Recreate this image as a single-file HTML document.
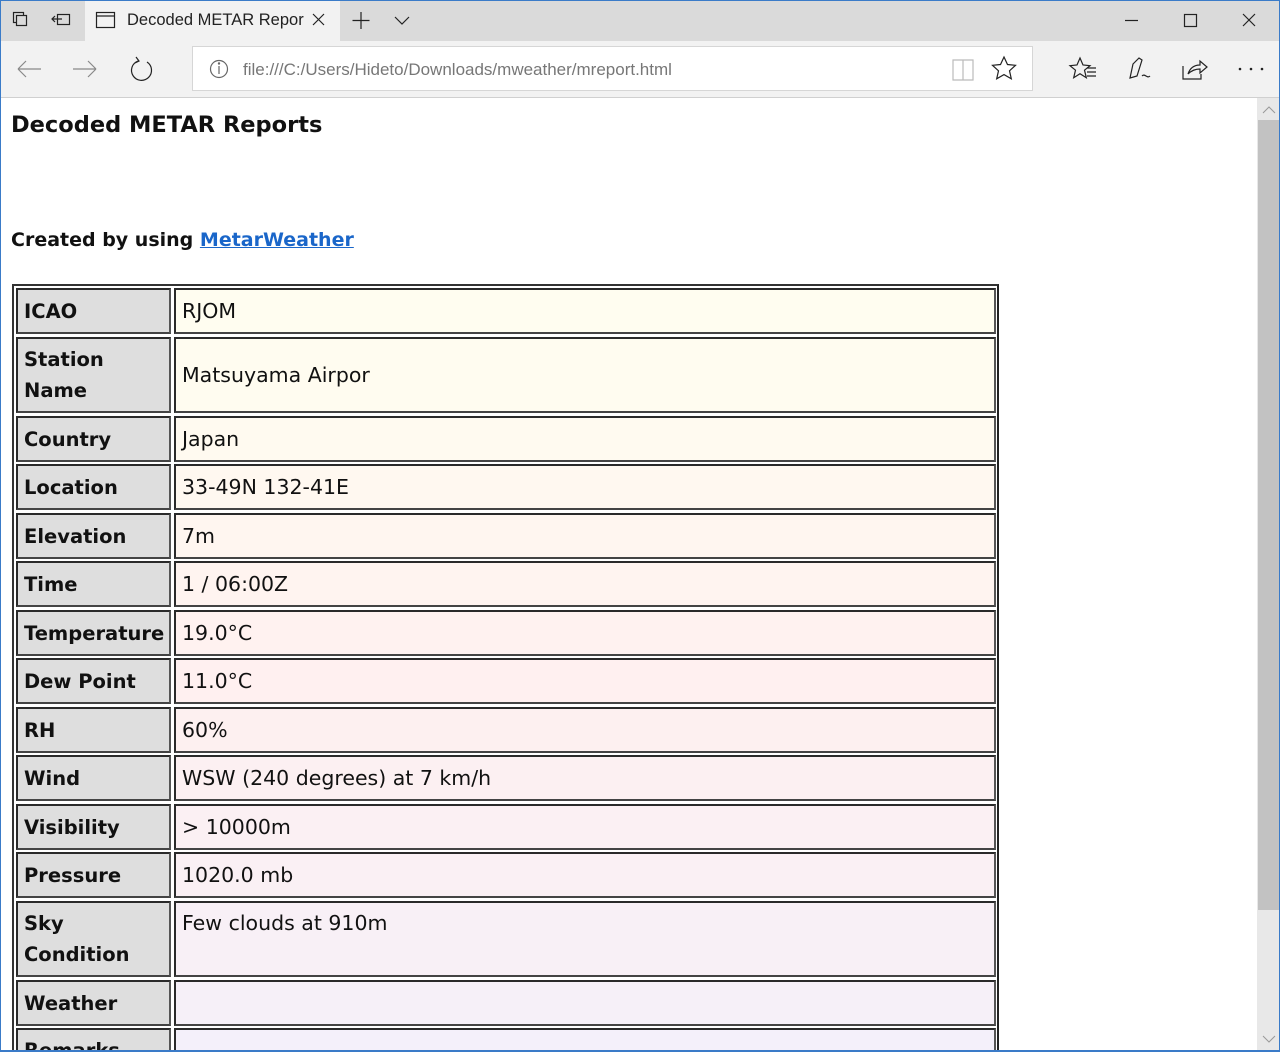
<!DOCTYPE html>
<html style="overflow:hidden;height:1052px"><head><meta charset="utf-8"><style>
*{margin:0;padding:0;box-sizing:border-box}
body{width:1280px;height:1052px;overflow:hidden;background:#fff;font-family:"DejaVu Sans","Liberation Sans",sans-serif;position:relative}
.abs{position:absolute}
#tabbar{left:0;top:0;width:1280px;height:41px;background:#dadada;border-top:1px solid #3a7bc8}
#tab{left:85px;top:1px;width:255px;height:40px;background:#f2f2f2}
#addr{left:0;top:41px;width:1280px;height:57px;background:#f2f2f2;border-bottom:1px solid #d0d0d0}
#url{left:192px;top:46px;width:841px;height:45px;background:#fff;border:1px solid #d6d6d6}
.ui{font-family:"Liberation Sans",sans-serif;color:#222}
#sb{left:1257px;top:98px;width:23px;height:954px;background:#e8e8e8}
#thumb{left:1258px;top:120px;width:21px;height:790px;background:#c2c2c2}
.c{position:absolute;border:2px solid #2a2a2a;border-right-color:#555;border-bottom-color:#444;padding-left:6px;display:flex;align-items:center;line-height:31px;color:#111}
.l{left:16px;width:155px;background:#dedede;font-weight:bold;font-size:19.5px}
.v{left:174px;width:822px;font-size:20.5px}
#wrap{position:absolute;left:0;top:0;width:1280px;height:1052px;overflow:hidden}
</style></head><body><div id="wrap">
<div id="tabbar" class="abs"></div>
<div id="tab" class="abs"></div>
<svg class="abs" style="left:0;top:0" width="1280" height="41" fill="none" stroke="#222" stroke-width="1.2">
<rect x="13.5" y="12.5" width="10" height="10"/><rect x="16.5" y="15.5" width="10" height="10" fill="#dadada"/>
<rect x="57.5" y="14.5" width="12" height="10"/><path d="M52 19h10M55 16l-3 3 3 3"/>
<rect x="96.5" y="12.5" width="18" height="15"/><path d="M97 16h17"/>
<path d="M313 14l11 11M324 14l-11 11"/>
<path d="M361 12v17M352.5 20.5h17"/><path d="M395 17l7 7 7-7"/>
<path d="M1125 20.5h13"/><rect x="1184.5" y="14.5" width="12" height="12"/><path d="M1243 14l12 12M1255 14l-12 12"/>
</svg>
<div class="abs ui" style="left:127px;top:11px;font-size:16.5px">Decoded METAR Repor</div>
<div id="addr" class="abs"></div>
<div id="url" class="abs"></div>
<svg class="abs" style="left:0;top:41px;z-index:2" width="1280" height="57" fill="none" stroke="#666" stroke-width="1.2">
<circle cx="219" cy="28" r="8.5"/><path d="M219 25v8"/><circle cx="219" cy="22.5" r=".6" fill="#666"/>
<path d="M953 19h10v20h-10zM963 19h10v20h-10z" stroke="#bbb"/>
<path d="M1004 16l3.5 7.5 8 .8-6 5.5 1.8 8-7.3-4.2-7.3 4.2 1.8-8-6-5.5 8-.8z" stroke="#222"/>
<path d="M1080 17l3 7 7 .7-5.5 4.5 1.8 7.5-6.3-4-6.3 4 1.8-7.5-5.5-4.5 7-.7z" stroke="#222"/><path d="M1087 27h9M1087 31h9M1087 35h9" stroke="#222"/>
<path d="M1130 37l3-14 6-6 3 2-5 16zM1142 35c3-3 5 3 8 0" stroke="#222"/>
<path d="M1183 25v13h18v-5M1188 33c2-6 6-9 12-9v-4l7 6-7 6v-4c-5 0-9 2-12 5z" stroke="#222"/>
<path d="M18 28h23M18 28l8-8M18 28l8 8" stroke="#888"/><path d="M73 28h23M96 28l-8-8M96 28l-8 8" stroke="#888"/>
<path d="M147 21a10 10 0 1 1-9-1M136 16l3 4-4 2" stroke="#222"/>
<circle cx="1240" cy="28" r="1.3" fill="#222" stroke="none"/><circle cx="1251" cy="28" r="1.3" fill="#222" stroke="none"/><circle cx="1262" cy="28" r="1.3" fill="#222" stroke="none"/>
</svg>
<div class="abs ui" style="left:243px;top:60px;font-size:17px;color:#777;z-index:3">file:///C:/Users/Hideto/Downloads/mweather/mreport.html</div>
<div id="sb" class="abs"></div><div id="thumb" class="abs"></div>
<svg class="abs" style="left:1257px;top:98px" width="23" height="954" fill="none" stroke="#999"><path d="M6 15l6-6 6 6M6 938l6 6 6-6"/></svg>

<div class="abs" style="left:11px;top:112px;font-size:22.5px;font-weight:bold;color:#111">Decoded METAR Reports</div>
<div class="abs" style="left:11px;top:229px;font-size:19px;font-weight:bold;color:#111">Created by using <span style="color:#1a66c9;text-decoration:underline">MetarWeather</span></div>

<div class="abs" style="left:12px;top:284px;width:987px;height:780px;border:2px solid #333;border-right-color:#222;border-bottom:none"></div>

<div class="c l" style="top:288px;height:46px">ICAO</div><div class="c v" style="top:288px;height:46px;background:#fffdf0">RJOM</div>
<div class="c l" style="top:337px;height:76px">Station<br>Name</div><div class="c v" style="top:337px;height:76px;background:#fffcf0">Matsuyama Airpor</div>
<div class="c l" style="top:416px;height:46px">Country</div><div class="c v" style="top:416px;height:46px;background:#fffaf0">Japan</div>
<div class="c l" style="top:464px;height:46px">Location</div><div class="c v" style="top:464px;height:46px;background:#fff8f0">33-49N 132-41E</div>
<div class="c l" style="top:513px;height:46px">Elevation</div><div class="c v" style="top:513px;height:46px;background:#fff6f0">7m</div>
<div class="c l" style="top:561px;height:46px">Time</div><div class="c v" style="top:561px;height:46px;background:#fff4f0">1 / 06:00Z</div>
<div class="c l" style="top:610px;height:46px">Temperature</div><div class="c v" style="top:610px;height:46px;background:#fff2f0">19.0°C</div>
<div class="c l" style="top:658px;height:46px">Dew Point</div><div class="c v" style="top:658px;height:46px;background:#fff0f0">11.0°C</div>
<div class="c l" style="top:707px;height:46px">RH</div><div class="c v" style="top:707px;height:46px;background:#fdf0f0">60%</div>
<div class="c l" style="top:755px;height:46px">Wind</div><div class="c v" style="top:755px;height:46px;background:#fcf0f2">WSW (240 degrees) at 7 km/h</div>
<div class="c l" style="top:804px;height:46px">Visibility</div><div class="c v" style="top:804px;height:46px;background:#fbf0f3">&gt; 10000m</div>
<div class="c l" style="top:852px;height:46px">Pressure</div><div class="c v" style="top:852px;height:46px;background:#faf0f4">1020.0 mb</div>
<div class="c l" style="top:901px;height:76px">Sky<br>Condition</div><div class="c v" style="top:901px;height:76px;background:#f8f0f6;align-items:flex-start;padding-top:5px">Few clouds at 910m</div>
<div class="c l" style="top:980px;height:46px">Weather</div><div class="c v" style="top:980px;height:46px;background:#f6f0f8"></div>
<div class="c l" style="top:1028px;height:46px;align-items:flex-start;padding-top:5px">Remarks</div><div class="c v" style="top:1028px;height:46px;background:#f4f0fa"></div>
<div class="abs" style="left:0;top:0;width:1px;height:1052px;background:#3a7bc8;z-index:5"></div>
<div class="abs" style="right:0;top:0;width:1px;height:1052px;background:#3a7bc8;z-index:5"></div>
<div class="abs" style="left:0;top:1050px;width:1280px;height:2px;background:#3a7bc8;z-index:5"></div>
</div></body></html>
